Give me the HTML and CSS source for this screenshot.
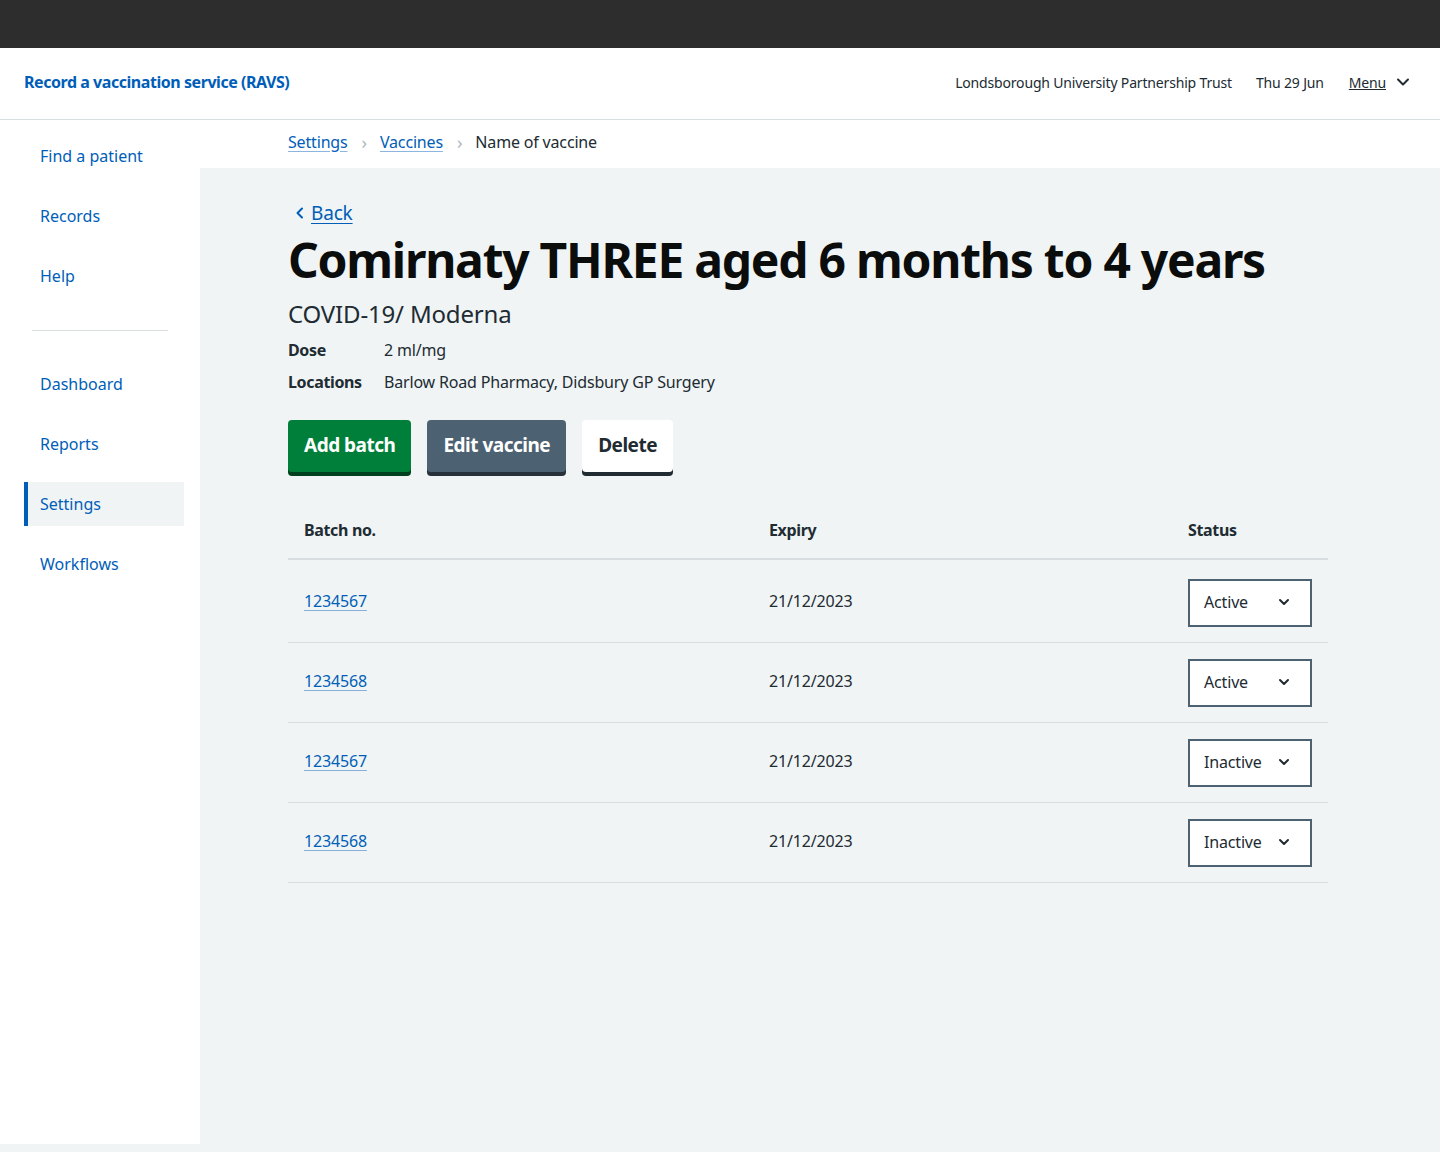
FILE: index.html
```html
<!DOCTYPE html>
<html lang="en">
<head>
<meta charset="utf-8">
<title>Comirnaty THREE aged 6 months to 4 years – RAVS</title>
<link rel="stylesheet" href="styles.css">
</head>
<body>
<div class="topbar"></div>
<header class="header">
  <a class="service" href="#">Record a vaccination service (RAVS)</a>
  <div class="header-right">
    <span class="org">Londsborough University Partnership Trust</span>
    <span class="date">Thu 29 Jun</span>
    <a class="menu" href="#">Menu</a>
    <svg class="menu-chev" width="14" height="14" viewBox="0 0 14 14"><path d="M2 4.5 L7 9.5 L12 4.5" fill="none" stroke="#212b32" stroke-width="2" stroke-linecap="round" stroke-linejoin="round"/></svg>
  </div>
</header>
<div class="layout">
  <nav class="sidebar">
    <ul class="nav">
      <li><a href="#">Find a patient</a></li>
      <li><a href="#">Records</a></li>
      <li><a href="#">Help</a></li>
      <li class="sep"></li>
      <li><a href="#">Dashboard</a></li>
      <li><a href="#">Reports</a></li>
      <li class="active"><a href="#">Settings</a></li>
      <li><a href="#">Workflows</a></li>
    </ul>
  </nav>
  <div class="content">
    <div class="breadcrumb">
      <a href="#">Settings</a>
      <span class="crumb-sep">&#8250;</span>
      <a href="#">Vaccines</a>
      <span class="crumb-sep">&#8250;</span>
      <span class="crumb-current">Name of vaccine</span>
    </div>
    <main class="main">
      <a class="back" href="#"><svg width="12" height="14" viewBox="0 0 12 14"><path d="M8 2.5 L3.5 7 L8 11.5" fill="none" stroke="#005eb8" stroke-width="2" stroke-linecap="round" stroke-linejoin="round"/></svg><span>Back</span></a>
      <h1 class="title">Comirnaty THREE aged 6 months to 4 years</h1>
      <p class="subtitle">COVID-19/ Moderna</p>
      <dl class="details">
        <dt>Dose</dt><dd>2 ml/mg</dd>
        <dt>Locations</dt><dd>Barlow Road Pharmacy, Didsbury GP Surgery</dd>
      </dl>
      <div class="buttons">
        <button class="btn btn-green">Add batch</button>
        <button class="btn btn-grey">Edit vaccine</button>
        <button class="btn btn-white">Delete</button>
      </div>
      <table class="batches">
        <thead>
          <tr><th class="c1">Batch no.</th><th class="c2">Expiry</th><th class="c3">Status</th></tr>
        </thead>
        <tbody>
          <tr><td><a href="#">1234567</a></td><td>21/12/2023</td><td class="sc"><div class="select"><span>Active</span><svg width="12" height="12" viewBox="0 0 12 12"><path d="M2 4 L6 8 L10 4" fill="none" stroke="#212b32" stroke-width="2" stroke-linecap="round" stroke-linejoin="round"/></svg></div></td></tr>
          <tr><td><a href="#">1234568</a></td><td>21/12/2023</td><td class="sc"><div class="select"><span>Active</span><svg width="12" height="12" viewBox="0 0 12 12"><path d="M2 4 L6 8 L10 4" fill="none" stroke="#212b32" stroke-width="2" stroke-linecap="round" stroke-linejoin="round"/></svg></div></td></tr>
          <tr><td><a href="#">1234567</a></td><td>21/12/2023</td><td class="sc"><div class="select"><span>Inactive</span><svg width="12" height="12" viewBox="0 0 12 12"><path d="M2 4 L6 8 L10 4" fill="none" stroke="#212b32" stroke-width="2" stroke-linecap="round" stroke-linejoin="round"/></svg></div></td></tr>
          <tr><td><a href="#">1234568</a></td><td>21/12/2023</td><td class="sc"><div class="select"><span>Inactive</span><svg width="12" height="12" viewBox="0 0 12 12"><path d="M2 4 L6 8 L10 4" fill="none" stroke="#212b32" stroke-width="2" stroke-linecap="round" stroke-linejoin="round"/></svg></div></td></tr>
        </tbody>
      </table>
    </main>
  </div>
</div>
</body>
</html>
```

FILE: styles.css
```css
* { box-sizing: border-box; }
html, body { margin: 0; padding: 0; }
body {
  font-family: "Noto Sans", "Liberation Sans", sans-serif;
  color: #212b32;
  background: #f0f4f5;
  height: 1152px;
  overflow: hidden;
  letter-spacing: -0.17px;
}
a { color: #005eb8; }

.topbar { height: 48px; background: #2d2d2d; }

.header {
  height: 72px;
  background: #fff;
  border-bottom: 1px solid #d8dde0;
  display: flex;
  align-items: center;
  justify-content: space-between;
  padding: 0 30px 3px 24px;
}
.service {
  font-size: 16px;
  font-weight: 700;
  text-decoration: none;
  letter-spacing: -0.45px;
  margin-top: -1px;
}
.header-right {
  display: flex;
  align-items: center;
  font-size: 14px;
}
.org { margin-right: 24px; }
.date { margin-right: 25px; }
.menu { color: #212b32; text-decoration: underline; margin-right: 10px; }
.menu-chev { display: block; }

.layout {
  display: flex;
  height: 1024px;
}
.sidebar {
  width: 200px;
  flex: none;
  background: #fff;
  padding: 14px 16px 0 24px;
}
.nav {
  list-style: none;
  margin: 0;
  padding: 0;
  display: flex;
  flex-direction: column;
  gap: 16px;
}
.nav li a {
  display: flex;
  align-items: center;
  height: 44px;
  font-size: 16px;
  letter-spacing: 0;
  text-decoration: none;
  border-left: 4px solid transparent;
  padding-left: 12px;
}
.nav li.active a {
  background: #f0f4f5;
  border-left-color: #005eb8;
}
.nav li.sep {
  height: 1px;
  background: #d8dde0;
  margin: 16px 16px 15px 8px;
}

.content { flex: 1; display: flex; flex-direction: column; }
.breadcrumb {
  height: 48px;
  background: #fff;
  display: flex;
  align-items: center;
  padding-left: 88px;
  font-size: 16px;
  padding-bottom: 5px;
}
.breadcrumb a {
  text-decoration-color: rgba(0, 94, 184, 0.45);
  text-underline-offset: 3px;
}
.crumb-sep { color: #aeb7bd; margin: 0 13px 0 14px; font-size: 18px; }
.crumb-current { color: #212b32; }

.main {
  padding: 32px 0 0 88px;
  width: 1128px;
}
.back {
  display: inline-flex;
  align-items: center;
  font-size: 19px;
  gap: 5px;
  text-underline-offset: 3px;
  margin-left: 6px;
}
.back svg { display: block; }
.title {
  font-size: 48px;
  font-weight: 700;
  line-height: 56px;
  margin: 6px 0 10px;
  letter-spacing: -1.25px;
  color: #0b0c0c;
}
.subtitle {
  font-size: 24px;
  line-height: 32px;
  margin: 0 0 8px;
}
.details {
  display: grid;
  grid-template-columns: 96px 1fr;
  row-gap: 8px;
  margin: 0;
  font-size: 16px;
  line-height: 24px;
}
.details dt { font-weight: 700; letter-spacing: -0.35px; }
.details dd { margin: 0; }

.buttons {
  display: flex;
  gap: 16px;
  margin-top: 26px;
}
.btn {
  font-family: inherit;
  font-size: 19px;
  font-weight: 700;
  letter-spacing: -0.5px;
  height: 52px;
  padding: 0 16px 3px;
  border: 0;
  border-radius: 4px;
  cursor: pointer;
}
.btn-green { background: #007f3b; color: #fff; box-shadow: 0 4px 0 #00401e; }
.btn-grey { background: #4c6272; color: #fff; box-shadow: 0 4px 0 #263139; }
.btn-white { background: #fff; color: #212b32; box-shadow: 0 4px 0 #212b32; }

.batches {
  margin-top: 36px;
  width: 1040px;
  border-collapse: collapse;
  font-size: 16px;
}
.batches th {
  text-align: left;
  font-weight: 700;
  letter-spacing: -0.35px;
  padding: 10px 16px 16px;
  border-bottom: 2px solid #d8dde0;
  line-height: 24px;
}
.batches .c1 { width: 465px; }
.batches .c2 { width: 419px; }
.batches td {
  padding: 14px 16px 18px;
  border-bottom: 1px solid #d8dde0;
  line-height: 24px;
  vertical-align: middle;
}
.batches tbody tr:first-child td { padding-top: 18px; }
.batches td.sc { padding: 16px 16px 15px; }
.batches tbody tr:first-child td.sc { padding-top: 19px; }
.batches td a { text-decoration-color: rgba(0, 94, 184, 0.45); text-underline-offset: 3px; }
.select {
  width: 124px;
  height: 48px;
  border: 2px solid #4c6272;
  background: #fff;
  display: flex;
  align-items: center;
  justify-content: space-between;
  padding: 0 20px 2px 14px;
}
.select svg { display: block; }
```
